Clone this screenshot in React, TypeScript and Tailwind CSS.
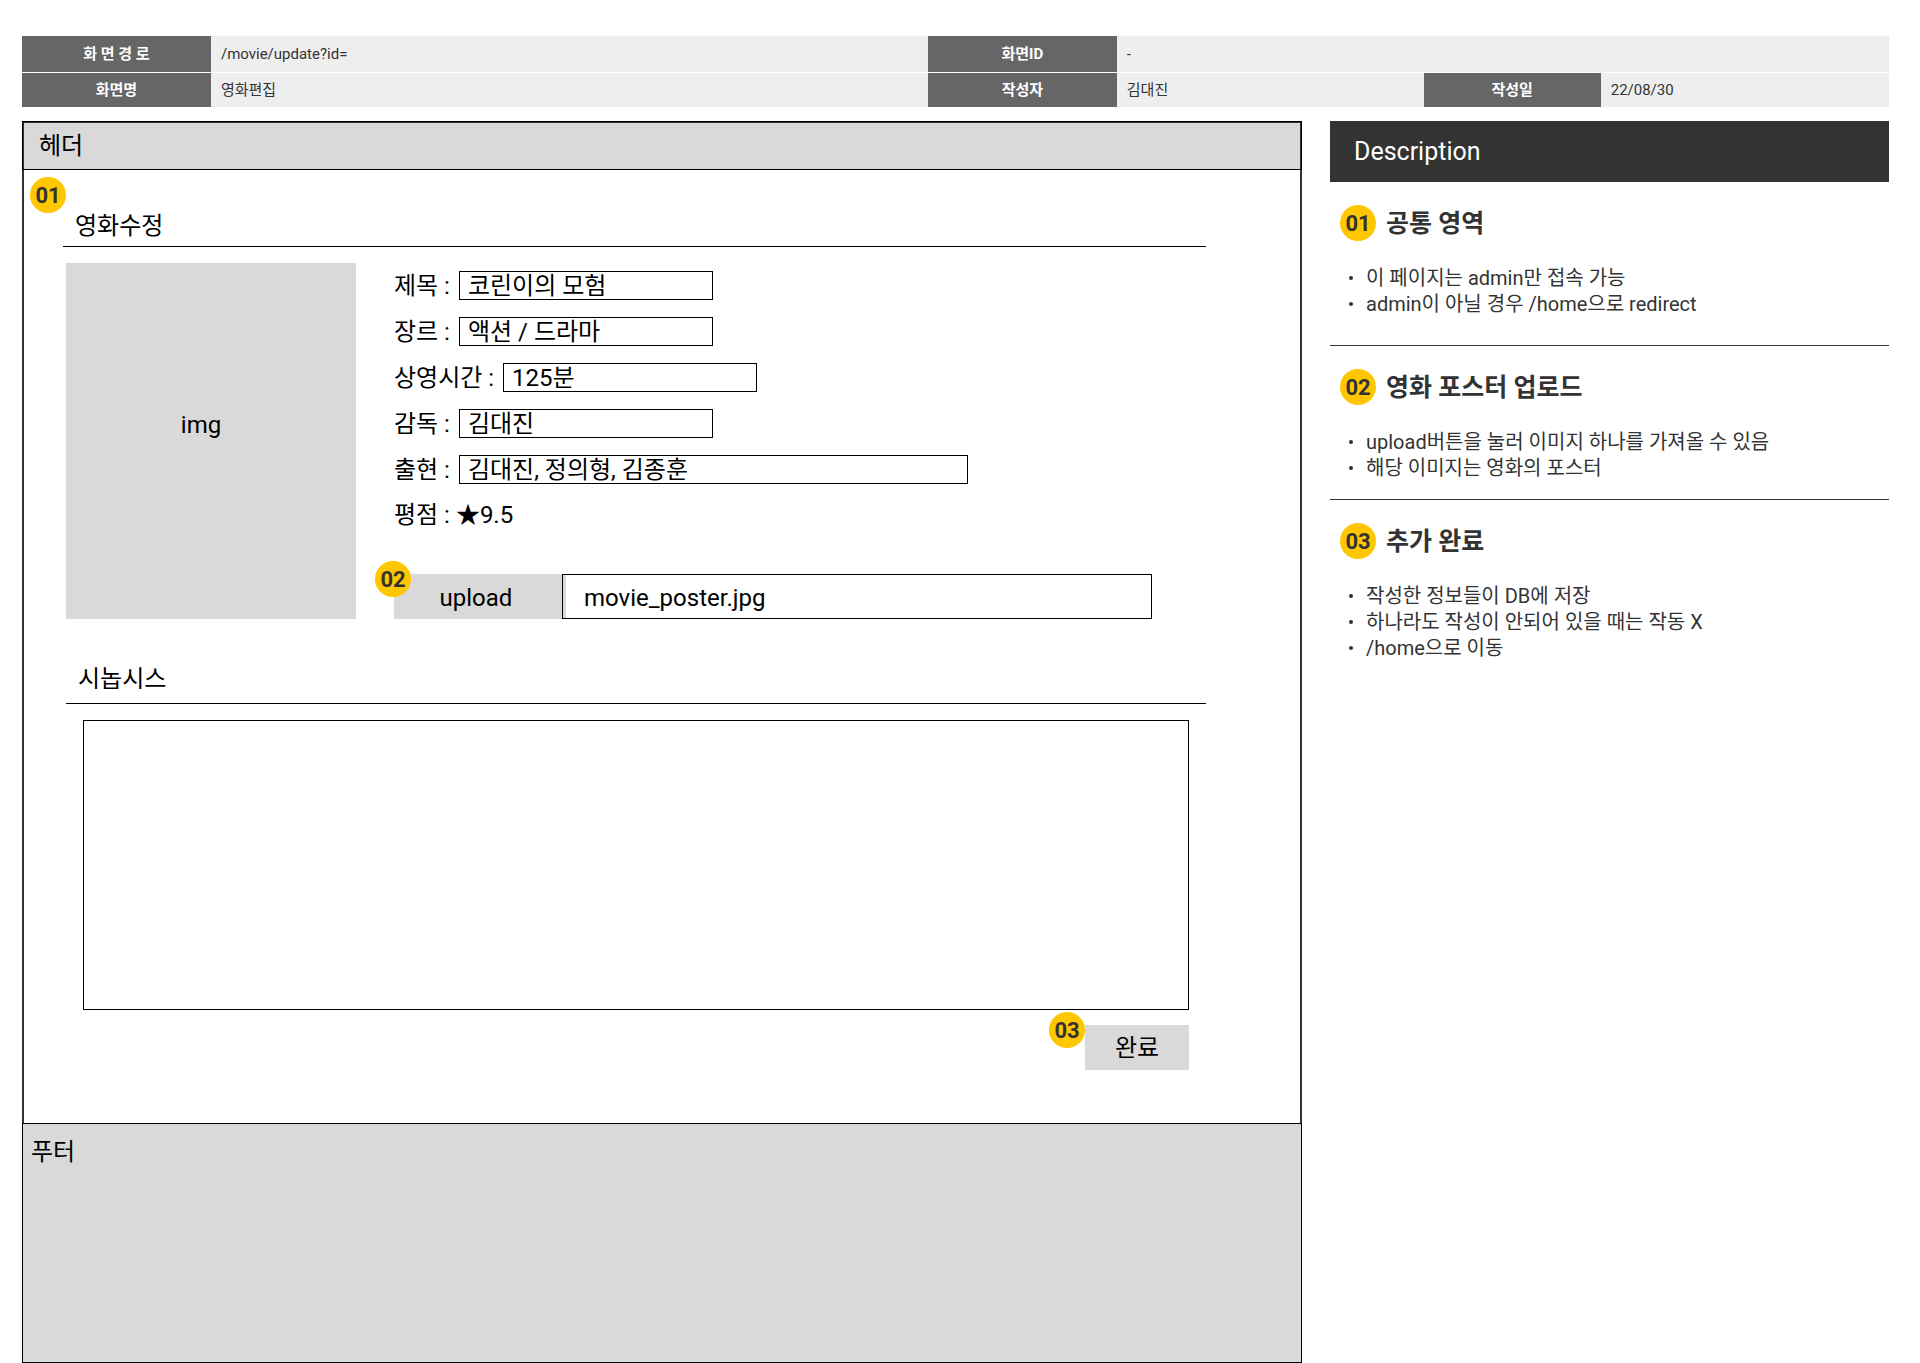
import { useState } from "react";
import type { ReactNode } from "react";

function Badge({ children, className = "" }: { children: ReactNode; className?: string }) {
  return (
    <span
      className={`flex size-9 shrink-0 items-center justify-center rounded-full bg-[#ffc700] pt-0.5 text-[22px] leading-none font-bold text-[#333333] ${className}`}
    >
      {children}
    </span>
  );
}

function Label({ children }: { children: ReactNode }) {
  return (
    <th scope="row" className="bg-[#666666] px-2 text-center font-bold text-white">
      {children}
    </th>
  );
}

function MetaTable() {
  return (
    <table className="w-full table-fixed border-collapse text-[15px] leading-5 text-[#333333]">
      <colgroup>
        <col className="w-[10.12%]" />
        <col className="w-[38.4%]" />
        <col className="w-[10.12%]" />
        <col className="w-[16.44%]" />
        <col className="w-[9.48%]" />
        <col />
      </colgroup>
      <tbody>
        <tr className="h-9 border-b border-white bg-[#eeeeee]">
          <Label>화 면 경 로</Label>
          <td className="px-2.5">/movie/update?id=</td>
          <Label>화면ID</Label>
          <td colSpan={3} className="px-2.5">-</td>
        </tr>
        <tr className="h-[35px] bg-[#eeeeee]">
          <Label>화면명</Label>
          <td className="px-2.5">영화편집</td>
          <Label>작성자</Label>
          <td className="px-2.5">김대진</td>
          <Label>작성일</Label>
          <td className="px-2.5">22/08/30</td>
        </tr>
      </tbody>
    </table>
  );
}

const fields = [
  { id: "title", label: "제목 :", value: "코린이의 모험", width: "w-[254px]" },
  { id: "genre", label: "장르 :", value: "액션 / 드라마", width: "w-[254px]" },
  { id: "runtime", label: "상영시간 :", value: "125분", width: "w-[254px]" },
  { id: "director", label: "감독 :", value: "김대진", width: "w-[254px]" },
  { id: "cast", label: "출현 :", value: "김대진, 정의형, 김종훈", width: "w-[509px]" },
];

function MovieForm() {
  const [synopsis, setSynopsis] = useState("");
  return (
    <form
      onSubmit={(e) => e.preventDefault()}
      className="relative border-x-2 border-[#333333] pt-10 pr-[94px] pb-[53px] pl-[39px]"
    >
      <Badge className="absolute top-[7px] left-1.5">01</Badge>
      <h1 className="border-b border-black pb-1 pl-3 leading-8">영화수정</h1>

      <div className="pl-[3px]">
        <div className="mt-4 flex">
          <div className="flex h-[356px] w-[290px] shrink-0 items-center justify-center bg-[#d9d9d9] pr-5 pb-8">
            img
          </div>
          <div className="ml-[38px] flex min-w-0 grow flex-col justify-between pt-2">
            <div className="flex flex-col gap-[17px]">
              {fields.map((f) => (
                <div key={f.id} className="flex h-[29px] items-center gap-[9px]">
                  <label htmlFor={f.id} className="shrink-0">{f.label}</label>
                  <input
                    id={f.id}
                    type="text"
                    defaultValue={f.value}
                    className={`h-[29px] min-w-0 border border-black px-2 pb-1 leading-6 ${f.width}`}
                  />
                </div>
              ))}
              <p className="leading-[29px]">평점 : ★9.5</p>
            </div>
            <div className="relative flex h-[45px] w-full max-w-[758px]">
              <button type="button" className="w-[172px] shrink-0 bg-[#d9d9d9] pt-0.5 pr-2">upload</button>
              <input
                type="text"
                aria-label="포스터 파일"
                defaultValue="movie_poster.jpg"
                className="relative -ml-1 min-w-0 grow border border-black bg-transparent px-[21px] pt-0.5"
              />
              <Badge className="absolute -top-[13px] -left-[19px]">02</Badge>
            </div>
          </div>
        </div>

        <h2 className="mt-11 border-b border-black pb-2 pl-3 leading-8">
          <label htmlFor="synopsis">시놉시스</label>
        </h2>
        <div className="mx-[17px] mt-4">
          <textarea
            id="synopsis"
            value={synopsis}
            onChange={(e) => setSynopsis(e.target.value)}
            className="block h-[290px] w-full resize-none border border-black p-2"
          />
          <div className="mt-[15px] flex justify-end">
            <div className="relative">
              <button type="submit" className="h-[45px] w-[104px] bg-[#d9d9d9]">완료</button>
              <Badge className="absolute -top-[13px] -left-9">03</Badge>
            </div>
          </div>
        </div>
      </div>
    </form>
  );
}

const notes = [
  {
    no: "01",
    title: "공통 영역",
    items: ["이 페이지는 admin만 접속 가능", "admin이 아닐 경우 /home으로 redirect"],
    box: "border-b pb-7",
  },
  {
    no: "02",
    title: "영화 포스터 업로드",
    items: ["upload버튼을 눌러 이미지 하나를 가져올 수 있음", "해당 이미지는 영화의 포스터"],
    box: "border-b pb-[18px]",
  },
  {
    no: "03",
    title: "추가 완료",
    items: ["작성한 정보들이 DB에 저장", "하나라도 작성이 안되어 있을 때는 작동 X", "/home으로 이동"],
    box: "",
  },
];

function Description() {
  return (
    <aside className="text-[#333333]">
      <h2 className="bg-[#333333] px-6 py-3.5 text-[25px] leading-[33px] text-white">Description</h2>
      {notes.map((n) => (
        <section key={n.no} className={`border-[#333333] pt-[23px] ${n.box}`}>
          <div className="flex items-center gap-2.5 pl-2.5">
            <Badge>{n.no}</Badge>
            <h3 className="pt-0.5 text-[25px] leading-[34px] font-bold">{n.title}</h3>
          </div>
          <ul className="mt-6 pl-[19px] text-xl leading-[26px]">
            {n.items.map((item) => (
              <li key={item} className="flex items-center gap-[13px]">
                <span className="size-1 shrink-0 rounded-full bg-[#333333]" />
                {item}
              </li>
            ))}
          </ul>
        </section>
      ))}
    </aside>
  );
}

export default function App() {
  return (
    <div className="min-h-screen bg-white pt-9 pr-[31px] pl-[22px] font-[Roboto,'Noto_Sans_CJK_KR',sans-serif] text-black">
      <MetaTable />
      <div className="mt-3.5 grid grid-cols-[1280fr_559fr] items-start gap-7">
        <main className="text-2xl">
          <header className="border border-black bg-[#d9d9d9]">
            <div className="border-x border-t border-[#333333] px-[15px] leading-[46px]">헤더</div>
          </header>
          <MovieForm />
          <footer className="h-60 border border-black bg-[#d9d9d9] px-2 pt-3 leading-8">푸터</footer>
        </main>
        <Description />
      </div>
    </div>
  );
}
